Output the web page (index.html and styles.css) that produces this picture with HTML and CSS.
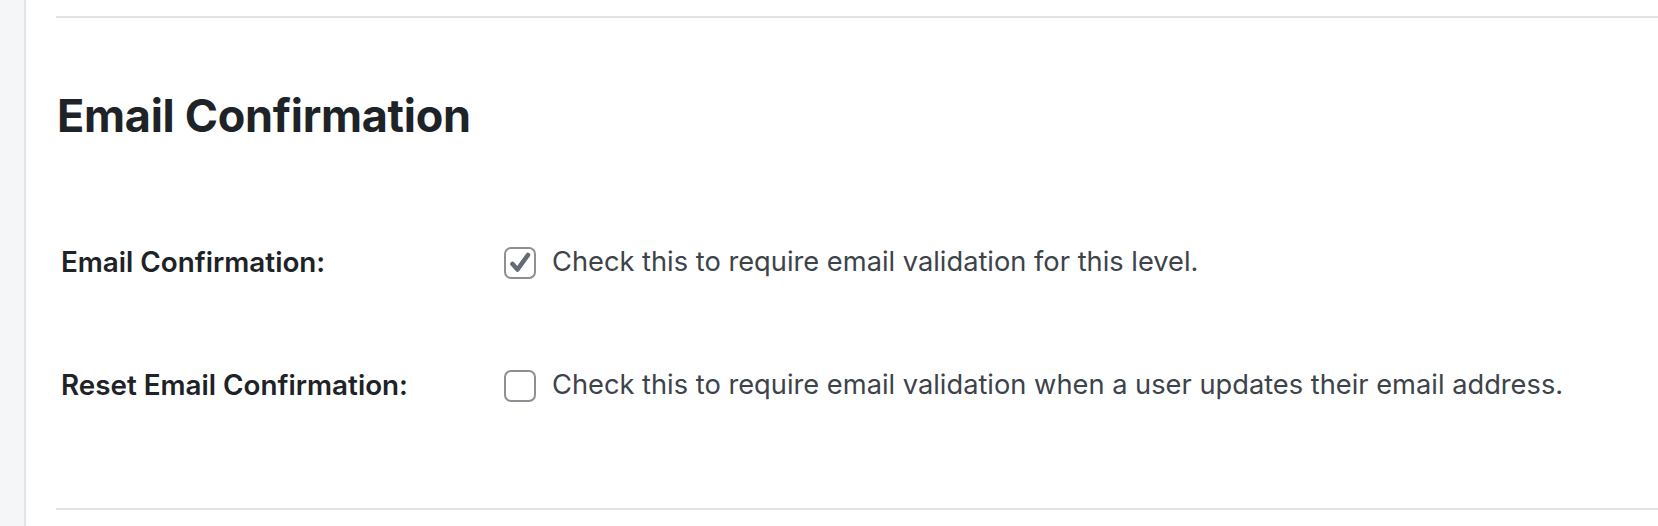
FILE: index.html
```html
<!DOCTYPE html>
<html lang="en">
<head>
<meta charset="utf-8">
<title>Email Confirmation</title>
<link rel="stylesheet" href="styles.css">
</head>
<body>
<div class="page">
  <aside class="sidebar"></aside>
  <main class="content">
    <hr class="rule rule-top">
    <h2 class="section-title">Email Confirmation</h2>
    <div class="form-table">
      <div class="row">
        <div class="label">Email Confirmation:</div>
        <div class="field">
          <span class="checkbox checked">
            <svg viewBox="0 0 28 28" aria-hidden="true"><polyline points="6.5,15 11.5,20.5 22,6"/></svg>
          </span>
          <span class="desc">Check this to require email validation for this level.</span>
        </div>
      </div>
      <div class="row">
        <div class="label">Reset Email Confirmation:</div>
        <div class="field">
          <span class="checkbox"></span>
          <span class="desc">Check this to require email validation when a user updates their email address.</span>
        </div>
      </div>
    </div>
    <hr class="rule rule-bottom">
  </main>
</div>
</body>
</html>
```
FILE: styles.css
```css
html, body {
  margin: 0;
  padding: 0;
  background: #ffffff;
}

body {
  font-family: Inter, "Noto Sans", "Liberation Sans", sans-serif;
  color: #1d2327;
}

.page {
  display: flex;
  min-height: 526px;
}

.sidebar {
  width: 24px;
  flex: 0 0 24px;
  background: #f5f6f8;
  border-right: 2px solid #e4e4e8;
}

.content {
  flex: 1;
  padding-left: 30px;
}

.rule {
  border: 0;
  height: 2px;
  background: #e3e3e7;
  margin: 0;
}

.rule-top {
  margin-top: 16px;
}

.section-title {
  margin: 70px 0 0 0;
  font-size: 45px;
  line-height: 56px;
  font-weight: 700;
  letter-spacing: -0.3px;
  color: #1d2327;
  padding-left: 1px;
}

.form-table {
  margin-top: 58px;
  padding-left: 5px;
}

.row {
  display: grid;
  grid-template-columns: 443px 1fr;
  padding: 45px 0 46px;
  align-items: center;
}

.label {
  font-size: 27.8px;
  line-height: 32px;
  font-weight: 600;
  color: #1d2327;
  margin-top: -2px;
}

.field {
  display: flex;
  align-items: center;
  gap: 16px;
}

.checkbox {
  box-sizing: border-box;
  width: 32px;
  height: 32px;
  flex: 0 0 32px;
  border: 2px solid #8c8f94;
  border-radius: 7px;
  background: #fff;
  display: flex;
  align-items: center;
  justify-content: center;
}

.checkbox svg {
  width: 28px;
  height: 28px;
  fill: none;
  stroke: #646b74;
  stroke-width: 4.6;
  stroke-linecap: round;
  stroke-linejoin: round;
}

.desc {
  font-size: 27.25px;
  line-height: 32px;
  color: #3c434a;
  margin-top: -2px;
}

.rule-bottom {
  margin-top: 60px;
}
```
